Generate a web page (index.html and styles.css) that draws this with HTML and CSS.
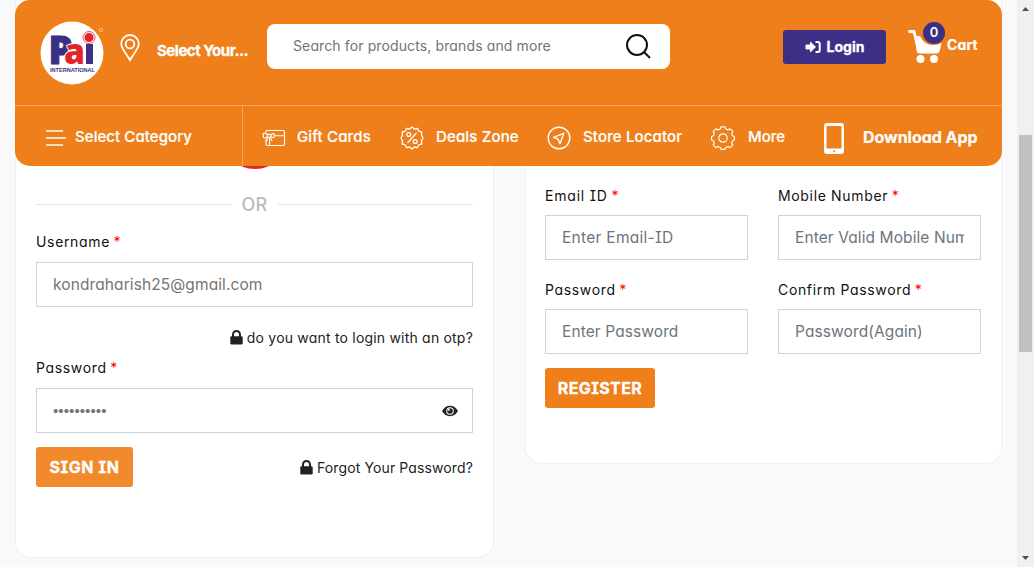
FILE: index.html
```
<!DOCTYPE html>
<html lang="en">
<head>
<meta charset="utf-8">
<title>Pai International - Login</title>
<link rel="stylesheet" href="styles.css">
</head>
<body>
<div class="page">
  <header class="header">
    <div class="topbar">
      <svg class="logo" width="66" height="66" viewBox="0 0 66 66">
        <circle cx="32" cy="33" r="31.5" fill="#fff"/>
        <text class="logo-word" x="8.500" y="43.500" textLength="24" lengthAdjust="spacingAndGlyphs" font-size="38" fill="#3b2f86" stroke="#3b2f86">P</text>
        <text class="logo-word" x="24" y="43.500" textLength="21" lengthAdjust="spacingAndGlyphs" font-size="35" fill="#e5232b" stroke="#fff" stroke-width="2" paint-order="stroke">a</text>
        <rect x="46" y="24" width="7" height="20" fill="#3b2f86"/>
        <circle cx="49" cy="17.500" r="5" fill="#e5232b" stroke="#fff" stroke-width="1"/>
        <circle cx="49" cy="17.500" r="6" fill="none" stroke="#e5232b" stroke-width=".8"/>
        <text class="logo-sub" x="10" y="51.500" textLength="45" lengthAdjust="spacingAndGlyphs">INTERNATIONAL</text>
        <circle cx="61" cy="10" r="1.700" fill="none" stroke="#fbd3ad" stroke-width=".7"/>
      </svg>
      <div class="location">
        <svg width="20" height="28" viewBox="0 0 20 28" fill="none" stroke="#fff" stroke-width="1.800"><path d="M10 26C7 20.500 1.200 15 1.200 9.800a8.800 8.800 0 0 1 17.600 0C18.800 15 13 20.500 10 26Z"/><circle cx="10" cy="10" r="4.300"/></svg>
        <span>Select Your...</span>
      </div>
      <div class="search">
        <input type="text" placeholder="Search for products, brands and more">
        <svg width="26" height="26" viewBox="0 0 26 26" fill="none" stroke="#111" stroke-width="2"><circle cx="12" cy="11" r="10"/><path d="m19 18 6 6"/></svg>
      </div>
      <a class="login">
        <svg width="16" height="12" viewBox="0 0 16 12"><path d="M1 4h4.500V1.200L10.500 6l-5 4.800V8H1Z" fill="#fff" stroke="#fff" stroke-linejoin="round"/><path d="M10.500 1H13a1.700 1.700 0 0 1 1.700 1.700v6.600A1.700 1.700 0 0 1 13 11h-2.500" fill="none" stroke="#fff" stroke-width="2"/></svg>
        <span>Login</span>
      </a>
      <a class="cart">
        <span class="cart-icon">
          <svg width="34" height="35" viewBox="0 0 34 35" fill="#fff"><path d="M1.600 3.500H6L10.500 22" fill="none" stroke="#fff" stroke-width="3" stroke-linecap="round" stroke-linejoin="round"/><path d="M7 8h5q4 9 13 9 5 0 8.500-2L32 22q-.8 3.500-4 3.500H12q-3 0-3.500-3Z"/><circle cx="12.500" cy="31" r="4"/><circle cx="26" cy="31" r="4"/></svg>
          <b class="badge">0</b>
        </span>
        <span>Cart</span>
      </a>
    </div>
    <nav class="nav">
      <a class="category">
        <svg width="20" height="18" viewBox="0 0 20 18" stroke="#fff" stroke-width="1.700"><path d="M0 2h17M0 9h20M0 16h17"/></svg>
        <span>Select Category</span>
      </a>
      <a class="gift">
        <svg width="24" height="18" viewBox="0 0 24 18" fill="none" stroke="#fff" stroke-width="1.100"><path d="M4 4V2.500Q4 1.500 5 1.500h16q1.500 0 1.500 1.500v12q0 1.500-1.500 1.500H5q-1 0-1-1.500V10M12 6.800h10.500M7.500 9v7.500"/><circle cx="7.300" cy="6.800" r="1.700"/><path d="M6 6Q1.500 3 1.300 5v3Q1.500 10 6 7.800M8.700 6Q12 3.500 12.200 5v3Q12 9.500 8.700 7.800M5.500 9l-1 3.500M8.500 9l1.500 3"/></svg>
        <span>Gift Cards</span>
      </a>
      <a class="deals">
        <svg width="24" height="24" viewBox="0 0 24 24" fill="none" stroke="#fff" stroke-width="1.300" stroke-linejoin="round"><path d="m12 1 2.400 2 3-.7 1.300 2.900 3 .8-.2 3.200L23 12l-1.500 2.800.2 3.200-3 .8-1.300 2.900-3-.7-2.400 2-2.400-2-3 .7-1.300-2.900-3-.8.2-3.200L1 12l1.500-2.800L2.300 6l3-.8 1.300-2.900 3 .7Z"/><circle cx="8.800" cy="8.500" r="1.900"/><circle cx="15.200" cy="15.500" r="1.900"/><path d="m16.500 7-9 10"/></svg>
        <span>Deals Zone</span>
      </a>
      <a class="store">
        <svg width="24" height="24" viewBox="0 0 24 24" fill="none" stroke="#fff" stroke-width="1.400" stroke-linejoin="round"><circle cx="12" cy="12" r="10.800"/><path d="M16.800 7.300 6.500 11.400l4.400 1.600 2.100 4.700Z"/></svg>
        <span>Store Locator</span>
      </a>
      <a class="more">
        <svg width="24" height="24" viewBox="0 0 24 24" fill="none" stroke="#fff" stroke-width="1.200" stroke-linejoin="round"><path d="M10 .8h4l.7 2.200 2.300.9 2.200-1 2.500 2.500-1 2.200.9 2.200 1.800.7v3.500l-1.800.7-.9 2.200 1 2.200-2.500 2.500-2.200-1-2.300.9-.7 1.900h-4l-.7-1.900-2.300-.9-2.200 1-2.500-2.500 1-2.200-.9-2.200-1.800-.7v-3.500l1.800-.7.9-2.200-1-2.200 2.500-2.500 2.200 1 2.300-.9Z"/><circle cx="12" cy="12" r="4.200"/></svg>
        <span>More</span>
      </a>
      <a class="download">
        <svg width="20" height="31" viewBox="0 0 20 31"><path d="M3 0h14q3 0 3 3v25q0 3-3 3H3q-3 0-3-3V3q0-3 3-3ZM2.500 4v20.500q0 1 1 1h13q1 0 1-1V4q0-1-1-1h-13q-1 0-1 1Z" fill="#fff" fill-rule="evenodd"/><circle cx="10" cy="28.200" r="1" fill="#ef7f1a"/></svg>
        <span>Download App</span>
      </a>
    </nav>
  </header>

  <main class="cards">
    <section class="card signin">
      <div class="social"></div>
      <div class="or"><span>OR</span></div>
      <label class="label">Username <i>*</i></label>
      <input class="field typed user" type="text" placeholder="kondraharish25@gmail.com">
      <a class="link otp"><svg width="13" height="15" viewBox="0 0 13 15"><path d="M3 7V4.500a3.500 3.500 0 0 1 7 0V7" fill="none" stroke="#222" stroke-width="2"/><rect x=".3" y="6.200" width="12.400" height="8.300" rx="1.300" fill="#222"/></svg><span>do you want to login with an otp?</span></a>
      <label class="label">Password <i>*</i></label>
      <div class="field typed password">
        <span>••••••••••</span>
        <svg width="16" height="12" viewBox="0 0 16 12"><path d="M0 6Q3 .8 8 .8T16 6q-3 5.200-8 5.200T0 6Z" fill="#222"/><circle cx="8" cy="6" r="3.800" fill="#fff"/><circle cx="8" cy="6" r="2.800" fill="#222"/><circle cx="6.800" cy="4.700" r="1.100" fill="#fff"/></svg>
      </div>
      <div class="actions">
        <button class="btn light">SIGN IN</button>
        <a class="link forgot"><svg width="13" height="15" viewBox="0 0 13 15"><path d="M3 7V4.500a3.500 3.500 0 0 1 7 0V7" fill="none" stroke="#222" stroke-width="2"/><rect x=".3" y="6.200" width="12.400" height="8.300" rx="1.300" fill="#222"/></svg><span>Forgot Your Password?</span></a>
      </div>
    </section>

    <section class="card register">
      <div class="grid">
        <div><label class="label email">Email ID <i>*</i></label><input class="field mail" placeholder="Enter Email-ID"></div>
        <div><label class="label">Mobile Number <i>*</i></label><input class="field" placeholder="Enter Valid Mobile Number"></div>
        <div><label class="label">Password <i>*</i></label><input class="field" placeholder="Enter Password"></div>
        <div><label class="label">Confirm Password <i>*</i></label><input class="field" placeholder="Password(Again)"></div>
      </div>
      <button class="btn">REGISTER</button>
    </section>
  </main>
</div>
<aside class="scrollbar">
  <svg width="7" height="4" viewBox="0 0 7 4"><path d="M0 4 3.500 0 7 4Z" fill="#505050"/></svg>
  <div class="track"><div class="thumb"></div></div>
  <svg width="7" height="4" viewBox="0 0 7 4"><path d="M0 0 3.500 4 7 0Z" fill="#505050"/></svg>
</aside>
</body>
</html>
```
FILE: styles.css
```
* { box-sizing: border-box; }
body {
  margin: 0;
  height: 567px;
  display: flex;
  overflow: hidden;
  background: #f9f9f9;
  font-family: Inter, "Open Sans", sans-serif;
  font-feature-settings: "cv11", "cv08";
}
svg { display: block; flex: none; }
input, button { font: inherit; font-feature-settings: inherit; letter-spacing: inherit; }
.page { position: relative; flex: 1; padding: 0 15px; }

.header {
  position: absolute;
  z-index: 2;
  top: 0;
  left: 15px;
  right: 15px;
  height: 166px;
  border-radius: 15px;
  background: #ef7f1a;
  color: #fff;
}
.topbar {
  height: 106px;
  display: flex;
  align-items: flex-start;
  border-bottom: 1px solid #f4a561;
  font-weight: 700;
}
.logo { margin: 20px 0 0 25px; }
.logo-word { font-family: "Open Sans", sans-serif; font-weight: 800; }
.logo-sub { font-family: "Liberation Sans", sans-serif; font-weight: 700; font-size: 5.5px; fill: #3b2f86; }
.location { display: flex; align-items: center; gap: 17px; width: 147px; margin: 34px 0 0 14px; font-size: 15px; letter-spacing: -.48px; white-space: nowrap; -webkit-text-stroke: .3px #fff; }
.location span { padding-top: 4px; }
.search { display: flex; align-items: center; justify-content: space-between; width: 403px; height: 45px; margin-top: 24px; padding: 0 19px 0 26px; border-radius: 8px; background: #fff; font-weight: 400; font-size: 14px; letter-spacing: .12px; }
.search input { width: 300px; border: 0; padding: 0 0 2px; outline: 0; background: none; }
.search input::placeholder { color: #6c757d; }
.login { display: flex; align-items: center; justify-content: center; gap: 6px; width: 103px; height: 34px; margin: 30px 0 0 113px; border-radius: 3px; background: #3b2f86; font-size: 14px; -webkit-text-stroke: .3px #fff; }
.login span { padding-bottom: 1px; }
.cart { display: flex; align-items: flex-start; gap: 5px; margin: 28px 0 0 22px; font-size: 14px; letter-spacing: .1px; }
.cart > span:last-child { padding-top: 8px; -webkit-text-stroke: .2px #fff; }
.cart-icon { position: relative; }
.badge { position: absolute; top: -6px; left: 15px; width: 22px; height: 22px; border-radius: 50%; background: #3b2f86; font-size: 13px; font-weight: 600; line-height: 21px; text-align: center; }

.nav { height: 60px; display: flex; font-size: 15px; font-weight: 500; letter-spacing: .15px; white-space: nowrap; -webkit-text-stroke: .2px #fff; }
.nav a { display: flex; align-items: center; padding-top: 4px; }
.nav a span { padding-bottom: 3px; }
.category { width: 228px; padding-left: 31px; gap: 9px; border-right: 1px solid #f4a561; letter-spacing: .07px; }
.gift { width: 138px; padding-left: 19px; gap: 11px; }
.deals { width: 147px; padding-left: 19px; gap: 12px; }
.store { width: 164px; padding-left: 19px; gap: 12px; }
.more { width: 132px; padding-left: 19px; gap: 13px; letter-spacing: 0; }
.download { gap: 19px; font-size: 16px; font-weight: 700; letter-spacing: -.03px; }

.cards { display: flex; align-items: flex-start; justify-content: space-between; }
.card { border: 1px solid #f0f0f0; border-top: 0; border-radius: 0 0 16px 16px; background: #fff; }
.signin { width: 479px; height: 558px; padding: 101px 20px 0; display: flex; flex-direction: column; }
.social { flex: none; width: 68px; height: 68px; margin: 0 auto; border-radius: 50%; background: #e5232b; }
.or { display: flex; align-items: center; gap: 10px; height: 22px; margin: 24px 0 17px; font-size: 18px; font-weight: 500; letter-spacing: .4px; color: #bbb; }
.or::before, .or::after { content: ""; flex: 1; height: 1px; background: #e3e3e3; }
.label { display: block; height: 20px; margin-bottom: 9px; font-size: 14px; line-height: 20px; letter-spacing: .66px; color: #111; white-space: nowrap; }
.signin .label { margin-bottom: 10px; }
.label i { margin-left: -1px; font-style: normal; color: #f00; }
.email { letter-spacing: .8px; }
.field { display: block; flex: none; width: 100%; height: 45px; padding: 0 16px; border: 1px solid #ced4da; border-radius: 0; outline: 0; background: #fff; font-size: 15.5px; letter-spacing: .1px; }
.field::placeholder { color: #6c757d; }
.typed { color: #757575; }
.typed::placeholder { color: #757575; }
.mail { letter-spacing: .28px; }
.link { display: flex; align-items: center; gap: 4px; color: #222; font-size: 14px; letter-spacing: .2px; }
.otp { align-self: flex-end; height: 20px; margin: 20px 0 11px; }
.password { display: flex; align-items: center; justify-content: space-between; padding-right: 14px; }
.password span { font-family: "Liberation Sans", sans-serif; font-size: 15px; letter-spacing: .1px; }
.actions { display: flex; align-items: center; justify-content: space-between; margin-top: 14px; }
.forgot { letter-spacing: .12px; }
.btn { height: 40px; padding: 0; width: 110px; border: 0; border-radius: 3px; background: #ef7f1a; color: #fff; font-size: 16px; font-weight: 700; letter-spacing: .4px; -webkit-text-stroke: .3px #fff; }
.light { width: 97px; background: #f18a2c; letter-spacing: .6px; }
.register { width: 477px; height: 464px; padding: 186px 20px 0 19px; }
.grid { display: grid; grid-template-columns: 1fr 1fr; gap: 20px 30px; margin-bottom: 14px; }

.scrollbar { width: 17px; display: flex; flex-direction: column; align-items: center; justify-content: space-between; padding: 7px 0; background: #f0f0f0; }
.track { flex: 1; padding-top: 124px; }
.thumb { width: 13px; height: 217px; background: #c1c1c1; }
```
